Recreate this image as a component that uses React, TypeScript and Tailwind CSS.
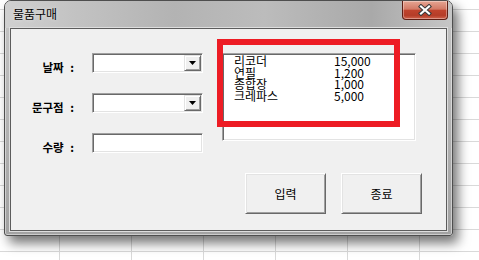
const items = [
  { name: "리코더", price: "15,000" },
  { name: "연필", price: "1,200" },
  { name: "종합장", price: "1,000" },
  { name: "크레파스", price: "5,000" },
];

function Sunken({ combo }: { combo?: boolean }) {
  return (
    <div className="flex h-[20px] w-[111px] justify-end border border-t-[#a0a0a0] border-l-[#a0a0a0] border-r-white border-b-white bg-white p-[1px] shadow-[inset_1px_1px_0_#696969,inset_-1px_-1px_0_#e3e3e3]">
      {combo && (
        <div className="flex w-[17px] items-center justify-center border border-t-[#e3e3e3] border-l-[#e3e3e3] border-r-[#696969] border-b-[#696969] bg-[#f0f0f0] shadow-[inset_1px_1px_0_#ffffff,inset_-1px_-1px_0_#a0a0a0]">
          <svg width="7" height="4" viewBox="0 0 7 4">
            <path d="M0 0h7L3.5 4z" fill="#000" />
          </svg>
        </div>
      )}
    </div>
  );
}

function Field({ label, combo }: { label: string; combo?: boolean }) {
  return (
    <div className="flex h-[29px] items-start gap-[18px]">
      <span className="w-[63px] text-right text-[11.5px] font-bold leading-[28px] text-black [word-spacing:4px]">
        {label}
      </span>
      <Sunken combo={combo} />
    </div>
  );
}

function WinButton({ children }: { children: string }) {
  return (
    <button className="flex h-[41px] w-[81px] items-center justify-center border border-t-white border-l-white border-r-[#696969] border-b-[#696969] bg-[#f0f0f0] text-[12px] text-black shadow-[inset_1px_1px_0_#e3e3e3,inset_-1px_-1px_0_#a0a0a0]">
      {children}
    </button>
  );
}

export default function App() {
  return (
    <div className="h-[260px] w-[479px] overflow-hidden bg-white bg-[linear-gradient(#d9d9d9_1px,transparent_1px),linear-gradient(90deg,#d9d9d9_1px,transparent_1px)] pl-[4px] font-['Noto_Sans_CJK_KR','Noto_Sans',sans-serif] [background-position:59px_9px] [background-size:72px_22px]">
      <div className="flex h-[236px] w-[449px] flex-col rounded-t-[7px] rounded-b-[3px] border border-[#4e4e4e] bg-[linear-gradient(#c6c6c6,#b4b4b4_50%,#a2a2a2)] shadow-[inset_0_0_0_1px_rgba(255,255,255,0.45),5px_7px_12px_rgba(0,0,0,0.55)]">
        {/* title bar */}
        <div className="flex h-[27px] rounded-t-[6px] bg-[linear-gradient(90deg,#d0d0d0,#c3c3c3_15%,#b3b3b3_38%,#bcbcbc_58%,#a9a9a9_82%,#c6c6c6)]">
          <span className="pl-[8px] pt-[5px] text-[12px] leading-[16px] text-black [text-shadow:0_0_4px_rgba(255,255,255,0.6)]">
            물품구매
          </span>
          <div className="ml-auto mr-[4px] flex h-[19px] w-[46px] items-center justify-center rounded-b-[4px] border border-t-0 border-[#5e1e14] bg-[linear-gradient(#e6a593,#d37a66_45%,#c0432d_52%,#b53d28_80%,#d0634c)] shadow-[inset_0_0_0_1px_rgba(255,255,255,0.35)]">
            <svg width="14" height="12" viewBox="0 0 14 12">
              <path d="M3 2.5l8 7M11 2.5l-8 7" stroke="#3a3a3a" strokeWidth="4.2" strokeLinecap="square" />
              <path d="M3 2.5l8 7M11 2.5l-8 7" stroke="#ffffff" strokeWidth="2.2" strokeLinecap="square" />
            </svg>
          </div>
        </div>

        {/* client area */}
        <div className="relative mx-[5px] mb-[4px] flex flex-1 gap-[19px] border border-[#5c5c5c] bg-[#f0f0f0] pt-[24px] shadow-[0_0_0_1px_#dedede]">
          <div className="flex flex-col gap-[11px]">
            <Field label="날짜 :" combo />
            <Field label="문구점 :" combo />
            <Field label="수량 :" />
          </div>

          <div className="flex flex-col">
            <div className="h-[88px] w-[194px] border border-t-[#a0a0a0] border-l-[#a0a0a0] border-r-white border-b-white bg-white pl-[11px] pt-[1px] shadow-[inset_1px_1px_0_#696969,inset_-1px_-1px_0_#e3e3e3]">
              {items.map((it) => (
                <div key={it.name} className="flex text-[12px] leading-[11.7px] text-black">
                  <span className="w-[100px]">{it.name}</span>
                  <span>{it.price}</span>
                </div>
              ))}
            </div>
            <div className="ml-[23px] mt-[32px] flex gap-[15px]">
              <WinButton>입력</WinButton>
              <WinButton>종료</WinButton>
            </div>
          </div>

          {/* red annotation box */}
          <div className="absolute left-[206px] top-[10px] h-[88px] w-[183px] border-[6px] border-[#ed1c24]" />
        </div>
      </div>
    </div>
  );
}
